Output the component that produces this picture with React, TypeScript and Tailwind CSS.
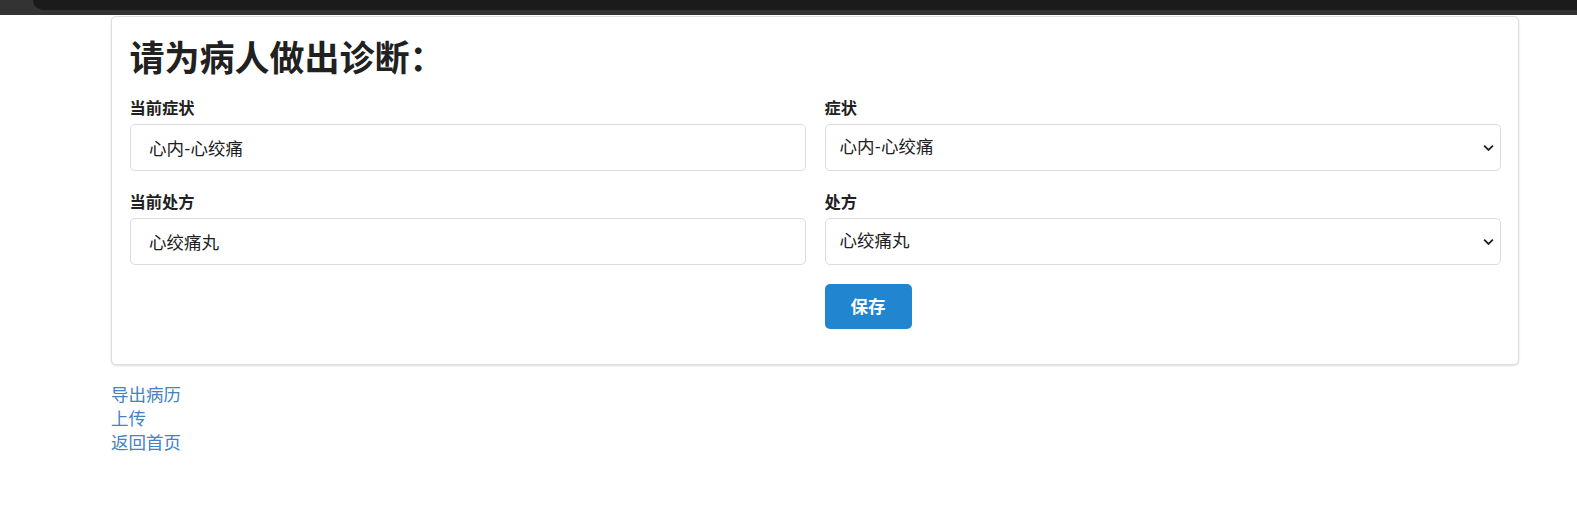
import { useState } from "react";

const font = "font-['Lato','Noto_Sans_CJK_SC',sans-serif]";

function Chevron() {
  return (
    <svg
      viewBox="0 0 12 8"
      className="pointer-events-none absolute right-[7px] top-1/2 h-[7px] w-[11px] -translate-y-1/2"
      fill="none"
      stroke="#222"
      strokeWidth="2"
    >
      <path d="M1 1.2 6 6.2 11 1.2" />
    </svg>
  );
}

function Field({ label, children }: { label: string; children: React.ReactNode }) {
  return (
    <div className="flex flex-col">
      <label className="mb-[5px] text-[16.25px] font-bold leading-[23px] text-[#212121]">
        {label}
      </label>
      {children}
    </div>
  );
}

export default function App() {
  const [symptom, setSymptom] = useState("心内-心绞痛");
  const [recipe, setRecipe] = useState("心绞痛丸");

  const inputCls =
    "h-[47px] w-full rounded-[5px] border border-[#dcdcdd] bg-white px-[18.5px] text-[17.5px] text-[#212121] outline-none";
  const selectCls =
    "h-[47px] w-full appearance-none rounded-[5px] border border-[#dcdcdd] bg-white pl-[14px] pr-8 text-[17.5px] text-[#212121] outline-none";

  return (
    <div className={`${font} min-h-[514px] w-full bg-white text-[17.5px] text-[#212121]`}>
      {/* browser chrome strip left over at the top */}
      <div className="h-[15px] w-full bg-[#333333]">
        <div className="ml-[33px] h-[10px] rounded-bl-[10px] bg-[#1b1b1b]" />
      </div>

      <div className="ml-[111px] w-[1408px]">
        <div className="mt-px rounded-[5px] border border-[#dedede] bg-white px-[17.5px] pt-[17.5px] pb-[17.5px] shadow-[0_1px_2px_0_rgba(34,36,38,0.15)]">
          <h1 className="mb-[16.5px] text-[35px] font-bold leading-[45px] text-[#212121]">
            请为病人做出诊断：
          </h1>

          <div className="grid grid-cols-2 gap-x-[19px] gap-y-[19px]">
            <Field label="当前症状">
              <input className={inputCls} value="心内-心绞痛" readOnly />
            </Field>
            <Field label="症状">
              <div className="relative">
                <select
                  className={selectCls}
                  value={symptom}
                  onChange={(e) => setSymptom(e.target.value)}
                >
                  <option>心内-心绞痛</option>
                  <option>心内-高血压</option>
                </select>
                <Chevron />
              </div>
            </Field>

            <Field label="当前处方">
              <input className={inputCls} value="心绞痛丸" readOnly />
            </Field>
            <Field label="处方">
              <div className="relative">
                <select
                  className={selectCls}
                  value={recipe}
                  onChange={(e) => setRecipe(e.target.value)}
                >
                  <option>心绞痛丸</option>
                  <option>降压片</option>
                </select>
                <Chevron />
              </div>
            </Field>

            <div />
            <div className="mb-[17.5px]">
              <button className="h-[45px] w-[87px] rounded-[5px] bg-[#2185d0] text-[17.5px] font-bold leading-none text-white">
                保存
              </button>
            </div>
          </div>
        </div>

        <div className="mt-[17.5px] flex flex-col text-[17.5px] leading-[24px] text-[#4183c4]">
          <a href="#">导出病历</a>
          <a href="#">上传</a>
          <a href="#">返回首页</a>
        </div>
      </div>
    </div>
  );
}
